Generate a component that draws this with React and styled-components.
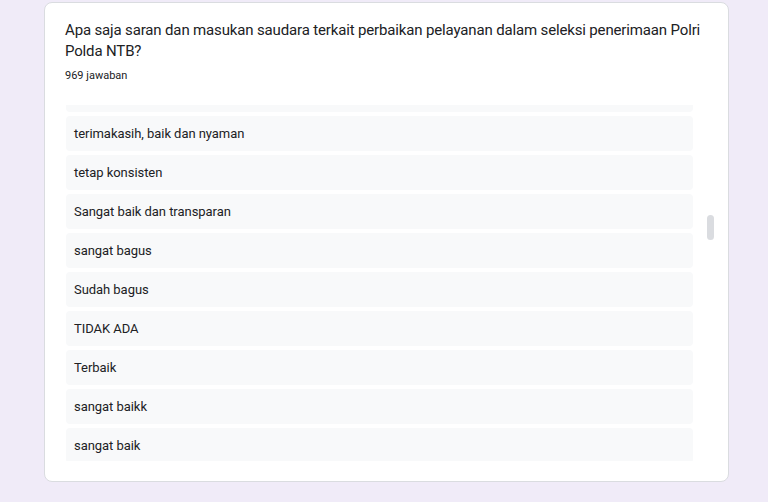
import React from "react";
import styled, { createGlobalStyle } from "styled-components";

// ------------ Data -------------------
const answers = [
  "baik",
  "terimakasih, baik dan nyaman",
  "tetap konsisten",
  "Sangat baik dan transparan",
  "sangat bagus",
  "Sudah bagus",
  "TIDAK ADA",
  "Terbaik",
  "sangat baikk",
  "sangat baik",
];

// --------------- Styles -------------------
const GlobalStyle = createGlobalStyle`
  html, body {
    margin: 0;
    padding: 0;
    background: #f0ebf8;
    font-family: Roboto, "Liberation Sans", Arial, sans-serif;
  }
`;

const Page = styled.div`
  box-sizing: border-box;
  width: 768px;
  height: 502px;
  padding: 2px 40px 0 44px;
  background: #f0ebf8;
  overflow: hidden;
`;

const Card = styled.div`
  box-sizing: border-box;
  width: 685px;
  height: 480px;
  background: #fff;
  border: 1px solid #dadce0;
  border-radius: 8px;
  padding: 17px 11px 0 20px;
  display: flex;
  flex-direction: column;
`;

const Title = styled.div`
  font-size: 15px;
  line-height: 21px;
  letter-spacing: -0.15px;
  color: #202124;
  padding-right: 8px;
`;

const Count = styled.div`
  margin-top: 6px;
  font-size: 11px;
  line-height: 16px;
  color: #202124;
`;

const ListArea = styled.div`
  margin-top: 21px;
  height: 356px;
  display: flex;
  gap: 14px;
`;

const List = styled.div`
  width: 627px;
  padding-left: 1px;
  overflow: hidden;
`;

const Items = styled.div`
  display: flex;
  flex-direction: column;
  gap: 4px;
  margin-top: ${(p) => -p.$offset}px;
`;

const Item = styled.div`
  box-sizing: border-box;
  height: 35px;
  flex-shrink: 0;
  display: flex;
  align-items: center;
  padding: 0 8px;
  background: #f8f9fa;
  border-radius: 4px;
  font-size: 13px;
  letter-spacing: -0.05px;
  color: #202124;
`;

const Track = styled.div`
  width: 8px;
  display: flex;
  flex-direction: column;
`;

const Thumb = styled.div`
  width: 7px;
  height: 25px;
  margin-top: ${(p) => p.$top}px;
  background: #dadce0;
  border-radius: 4px;
`;
// -------- end of Styles -------------------

export default function App() {
  return (
    <>
      <GlobalStyle />
      <Page>
        <Card>
          <Title>
            Apa saja saran dan masukan saudara terkait perbaikan pelayanan
            dalam seleksi penerimaan Polri Polda NTB?
          </Title>
          <Count>969 jawaban</Count>
          <ListArea>
            <List>
              <Items $offset={28}>
                {answers.map((a, i) => (
                  <Item key={i}>{a}</Item>
                ))}
              </Items>
            </List>
            <Track>
              <Thumb $top={110} />
            </Track>
          </ListArea>
        </Card>
      </Page>
    </>
  );
}
